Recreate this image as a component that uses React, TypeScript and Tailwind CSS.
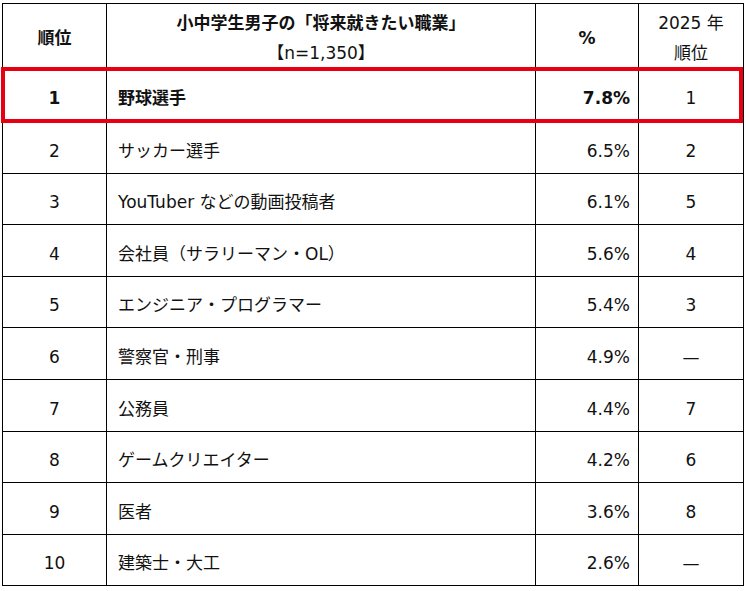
const rows = [
  { rank: '1', job: '野球選手', pct: '7.8%', prev: '1', bold: true },
  { rank: '2', job: 'サッカー選手', pct: '6.5%', prev: '2' },
  { rank: '3', job: 'YouTuber などの動画投稿者', pct: '6.1%', prev: '5' },
  { rank: '4', job: '会社員（サラリーマン・OL）', pct: '5.6%', prev: '4' },
  { rank: '5', job: 'エンジニア・プログラマー', pct: '5.4%', prev: '3' },
  { rank: '6', job: '警察官・刑事', pct: '4.9%', prev: '—' },
  { rank: '7', job: '公務員', pct: '4.4%', prev: '7' },
  { rank: '8', job: 'ゲームクリエイター', pct: '4.2%', prev: '6' },
  { rank: '9', job: '医者', pct: '3.6%', prev: '8' },
  { rank: '10', job: '建築士・大工', pct: '2.6%', prev: '—' },
];

const cell = 'border border-black';

export default function App() {
  return (
    <div
      className="w-[746px] h-[591px] bg-white pl-[2px] pt-[3px] text-[17px] text-[#111]"
      style={{ fontFamily: '"DejaVu Sans", "Noto Sans CJK JP", sans-serif' }}
    >
      <div className="relative w-[741px]">
        <table className="border-collapse table-fixed w-[741px] border-[1.5px] border-black">
          <colgroup>
            <col className="w-[104px]" />
            <col className="w-[429px]" />
            <col className="w-[103px]" />
            <col className="w-[105px]" />
          </colgroup>
          <thead>
            <tr className="h-[65px]">
              <th className={`${cell} pt-[5px] font-bold text-center`}>順位</th>
              <th className={`${cell} pt-[4px] text-center leading-[30px]`}>
                <div className="font-bold">小中学生男子の「将来就きたい職業」</div>
                <div className="font-normal">【n=1,350】</div>
              </th>
              <th className={`${cell} pt-[5px] font-bold text-center`}>%</th>
              <th className={`${cell} pt-[4px] font-normal text-center leading-[30px]`}>
                <div>2025 年</div>
                <div>順位</div>
              </th>
            </tr>
          </thead>
          <tbody>
            {rows.map((r, i) => (
              <tr key={i} className={i === 0 ? 'h-[53px]' : 'h-[51.6px]'}>
                <td className={`${cell} pt-[8px] text-center ${r.bold ? 'font-bold' : ''}`}>{r.rank}</td>
                <td className={`${cell} pt-[8px] pl-[11px] ${r.bold ? 'font-bold' : ''}`}>{r.job}</td>
                <td className={`${cell} pt-[8px] text-right pr-[8px] ${r.bold ? 'font-bold' : ''}`}>{r.pct}</td>
                <td className={`${cell} pt-[8px] text-center`}>{r.prev}</td>
              </tr>
            ))}
          </tbody>
        </table>
        <div className="absolute left-[-1px] top-[64px] w-[742px] h-[56px] border-[4px] border-[#e60012] pointer-events-none" />
      </div>
    </div>
  );
}
